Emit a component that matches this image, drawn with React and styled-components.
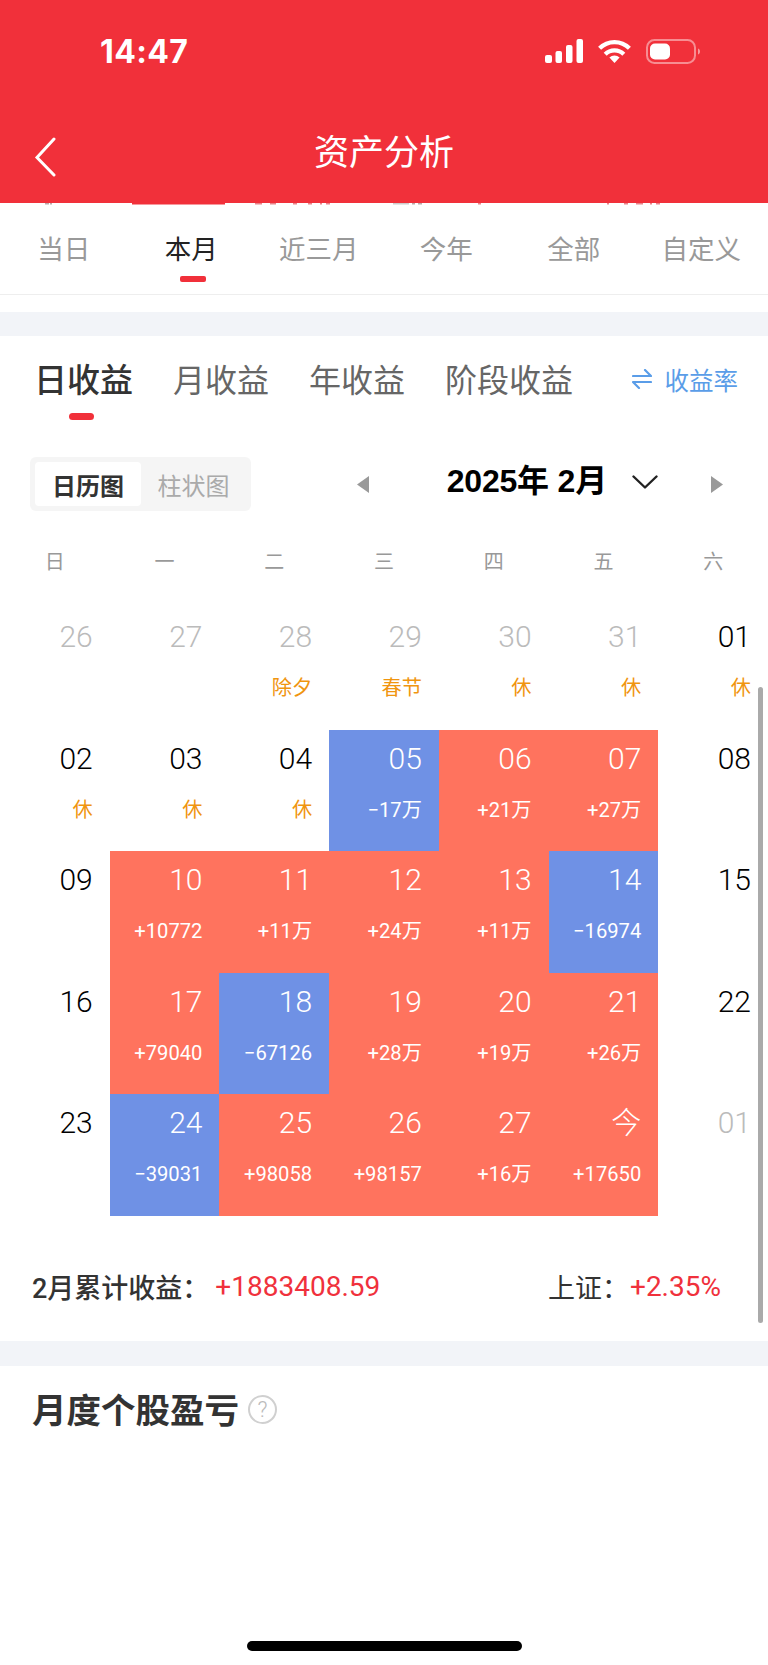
import React from "react";
import styled, { createGlobalStyle } from "styled-components";

const CJK = `Roboto, "Noto Sans CJK SC", sans-serif`;

const GlobalStyle = createGlobalStyle`
  html, body {
    margin: 0;
    padding: 0;
    background: #fff;
  }
  * {
    box-sizing: border-box;
  }
`;

const Page = styled.div`
  position: relative;
  width: 768px;
  height: 1665px;
  overflow: hidden;
  background: #fff;
  font-family: ${CJK};
`;

const Header = styled.header`
  height: 203px;
  background: #f1303a;
  color: #fff;
`;

const StatusBar = styled.div`
  height: 102px;
  display: flex;
  align-items: center;
  justify-content: space-between;
  padding: 0 68px 0 100px;
`;

const Time = styled.span`
  font-family: Inter, sans-serif;
  font-size: 32px;
  font-weight: 700;
  letter-spacing: 0.4px;
`;

const StatusIcons = styled.div`
  display: flex;
  align-items: center;
  gap: 14px;
`;

const NavBar = styled.div`
  height: 101px;
  display: grid;
  grid-template-columns: 1fr auto 1fr;
  align-items: center;
  padding-left: 34px;
`;

const BackIcon = styled.svg`
  display: block;
  margin-top: 8px;
`;

const NavTitle = styled.h1`
  margin: 2px 0 0 0;
  font-size: 35px;
  font-weight: 400;
  line-height: 40px;
  transform: translateX(-17px);
`;

const Sliver = styled.svg`
  display: block;
`;

const PeriodTabs = styled.nav`
  display: grid;
  grid-template-columns: repeat(6, 1fr);
  height: 90px;
  padding: 31px 3px 0 0;
  border-bottom: 1px solid #eeeeee;
`;

const PeriodTab = styled.div`
  display: flex;
  flex-direction: column;
  align-items: center;
  font-size: 26.5px;
  line-height: 28px;
  color: ${(p) => (p.$active ? "#222" : "#999")};
`;

const PeriodMark = styled.i`
  display: block;
  width: 26px;
  height: 6px;
  margin: 12px 0 0 4px;
  border-radius: 2px;
  background: #f1303a;
`;

const Band = styled.div`
  height: ${(p) => p.$h}px;
  margin-top: ${(p) => p.$mt || 0}px;
  background: #f2f4f8;
`;

const MainCard = styled.section`
  height: 1005px;
  background: #fff;
`;

const ProfitTabs = styled.div`
  display: flex;
  align-items: flex-start;
  gap: 40px;
  height: 121px;
  padding: 27px 30px 0 34px;
`;

const ProfitTab = styled.div`
  display: flex;
  flex-direction: column;
  align-items: center;
  font-size: ${(p) => (p.$active ? 33 : 32)}px;
  line-height: 36px;
  font-weight: ${(p) => (p.$active ? 500 : 400)};
  color: ${(p) => (p.$active ? "#333" : "#666")};
`;

const ProfitMark = styled.i`
  display: block;
  width: 25px;
  height: 7px;
  margin: 14px 5px 0 0;
  border-radius: 4px;
  background: #f1303a;
`;

const RateLink = styled.div`
  display: flex;
  align-items: center;
  gap: 13px;
  margin-left: auto;
  height: 32px;
  font-size: 24.5px;
  color: #5a9de8;
`;

const ToolRow = styled.div`
  display: flex;
  align-items: center;
  height: 54px;
  padding: 0 45px 0 30px;
`;

const Toggle = styled.div`
  display: flex;
  width: 221px;
  height: 54px;
  padding: 5px;
  border-radius: 6px;
  background: #f5f5f5;
`;

const ToggleItem = styled.div`
  display: flex;
  align-items: center;
  justify-content: center;
  width: ${(p) => (p.$active ? 106 : 105)}px;
  border-radius: 4px;
  font-size: 24px;
  font-weight: ${(p) => (p.$active ? 600 : 400)};
  color: ${(p) => (p.$active ? "#333" : "#aaa")};
  background: ${(p) => (p.$active ? "#fff" : "transparent")};
`;

const Pager = styled.div`
  display: flex;
  align-items: center;
  margin-left: auto;
`;

const MonthTitle = styled.div`
  margin: 0 25px 6px 78px;
  font-family: "Liberation Sans", "Noto Sans CJK SC", sans-serif;
  font-size: 32px;
  line-height: 36px;
  font-weight: 700;
  letter-spacing: -0.2px;
  color: #000;
  white-space: nowrap;
`;

const Chevron = styled.svg`
  display: block;
  margin-bottom: 4px;
`;

const NextSlot = styled.span`
  display: block;
  margin-left: 53px;
`;

const WeekRow = styled.div`
  display: grid;
  grid-template-columns: repeat(7, 1fr);
  margin: 40px 0 35px;
`;

const WeekDay = styled.div`
  text-align: center;
  font-size: 20px;
  line-height: 22px;
  color: #999;
`;

const Calendar = styled.div`
  display: grid;
  grid-template-columns: repeat(7, 1fr);
  grid-auto-rows: 121.6px;
`;

const toneBg = { up: "#ff735e", down: "#6f91e5" };

const DayCell = styled.div`
  display: flex;
  flex-direction: column;
  align-items: flex-end;
  padding: 12px 17px 0 0;
  background: ${(p) => toneBg[p.$tone] || "transparent"};
`;

const DayNum = styled.div`
  font-size: 30px;
  line-height: 33px;
  font-weight: 300;
  color: ${(p) => (p.$tone ? "#fff" : p.$muted ? "#bbb" : "#000")};
`;

const DayNote = styled.div`
  margin-top: 22px;
  font-size: 20.2px;
  line-height: 26px;
  color: ${(p) => (p.$tone ? "#fff" : "#f0950f")};
`;

const Summary = styled.div`
  display: flex;
  align-items: center;
  height: 40px;
  margin-top: 51px;
  padding: 0 47px 0 32px;
`;

const SummaryLabel = styled.span`
  font-size: 27px;
  font-weight: ${(p) => (p.$strong ? 500 : 400)};
  color: #333;
`;

const SummaryValue = styled.span`
  margin-right: ${(p) => (p.$push ? "auto" : "0")};
  margin-left: ${(p) => p.$gap}px;
  font-size: 28px;
  font-weight: 400;
  color: #f0313c;
`;

const StockTitle = styled.div`
  display: flex;
  align-items: center;
  gap: 9px;
  padding: 25px 0 0 32px;
  font-size: 34.5px;
  line-height: 40px;
  font-weight: 600;
  color: #333;
`;

const Help = styled.span`
  display: flex;
  align-items: center;
  justify-content: center;
  width: 29px;
  height: 29px;
  margin-bottom: 3px;
  border: 2px solid #d0d0d0;
  border-radius: 50%;
  font-size: 22px;
  font-weight: 300;
  line-height: 1;
  color: #bbb;
`;

const Scrollbar = styled.div`
  position: absolute;
  top: 687px;
  left: 758px;
  width: 5px;
  height: 636px;
  border-radius: 3px;
  background: #aaa;
`;

const HomeBar = styled.div`
  position: absolute;
  top: 1641px;
  left: 247px;
  width: 275px;
  height: 10px;
  border-radius: 5px;
  background: #000;
`;

const SignalIcon = () => (
  <svg width="38" height="24" viewBox="0 0 38 24" fill="#fff">
    <rect x="0" y="16" width="7" height="8" rx="2" />
    <rect x="10.5" y="12" width="6.5" height="12" rx="2" />
    <rect x="21" y="6" width="6.5" height="18" rx="2" />
    <rect x="31.5" y="0" width="6.5" height="24" rx="2" />
  </svg>
);

const WifiIcon = () => (
  <svg width="35" height="24" viewBox="0 0 35 24" fill="none" stroke="#fff" strokeWidth="4.2">
    <path d="M2.6 9.3A21 21 0 0 1 32.4 9.3" />
    <path d="M8.2 15.2A13 13 0 0 1 26.8 15.2" />
    <path d="M17.5 24 L12.4 18.6 A7.2 7.2 0 0 1 22.6 18.6 Z" fill="#fff" stroke="none" />
  </svg>
);

const BatteryIcon = () => (
  <svg width="54" height="25" viewBox="0 0 54 25" fill="none">
    <rect x="1" y="1" width="48" height="23" rx="7.5" stroke="#fff" strokeOpacity="0.45" strokeWidth="2" />
    <rect x="4" y="4.5" width="20" height="16" rx="5" fill="#fff" />
    <path d="M52 9.5c1.5.6 2 1.6 2 3s-.5 2.4-2 3z" fill="#fff" fillOpacity="0.5" />
  </svg>
);

const Triangle = ({ dir }) => (
  <svg width="12" height="17" viewBox="0 0 12 17" fill="#999" style={{ display: "block" }}>
    <path d={dir === "left" ? "M12 0V17L0 8.5Z" : "M0 0V17L12 8.5Z"} />
  </svg>
);

const fragments = [
  [45, 4, "#b9a9a9"], [50, 2, "#b9a9a9"],
  [132, 93, "#f1303a"],
  [255, 7, "#e8838a"], [270, 6, "#e8838a"], [293, 4, "#e8838a"], [308, 4, "#e8838a"], [320, 2, "#e8838a"], [326, 4, "#e8838a"],
  [393, 16, "#ccc"], [412, 3, "#b9a9a9"], [418, 4, "#b9a9a9"],
  [478, 3, "#e8838a"],
  [607, 2, "#e8838a"], [624, 4, "#e8838a"], [636, 7, "#e8838a"], [650, 2, "#e8838a"], [656, 4, "#e8838a"],
];

const periods = ["当日", "本月", "近三月", "今年", "全部", "自定义"];
const profits = ["日收益", "月收益", "年收益", "阶段收益"];
const weekDays = ["日", "一", "二", "三", "四", "五", "六"];

const days = [
  { n: "26", muted: true }, { n: "27", muted: true },
  { n: "28", muted: true, note: "除夕" }, { n: "29", muted: true, note: "春节" },
  { n: "30", muted: true, note: "休" }, { n: "31", muted: true, note: "休" },
  { n: "01", note: "休" },
  { n: "02", note: "休" }, { n: "03", note: "休" }, { n: "04", note: "休" },
  { n: "05", tone: "down", note: "−17万" }, { n: "06", tone: "up", note: "+21万" },
  { n: "07", tone: "up", note: "+27万" }, { n: "08" },
  { n: "09" }, { n: "10", tone: "up", note: "+10772" }, { n: "11", tone: "up", note: "+11万" },
  { n: "12", tone: "up", note: "+24万" }, { n: "13", tone: "up", note: "+11万" },
  { n: "14", tone: "down", note: "−16974" }, { n: "15" },
  { n: "16" }, { n: "17", tone: "up", note: "+79040" }, { n: "18", tone: "down", note: "−67126" },
  { n: "19", tone: "up", note: "+28万" }, { n: "20", tone: "up", note: "+19万" },
  { n: "21", tone: "up", note: "+26万" }, { n: "22" },
  { n: "23" }, { n: "24", tone: "down", note: "−39031" }, { n: "25", tone: "up", note: "+98058" },
  { n: "26", tone: "up", note: "+98157" }, { n: "27", tone: "up", note: "+16万" },
  { n: "今", tone: "up", note: "+17650" }, { n: "01", muted: true },
];

export default function App() {
  return (
    <Page>
      <GlobalStyle />
      <Header>
        <StatusBar>
          <Time>14:47</Time>
          <StatusIcons>
            <SignalIcon />
            <WifiIcon />
            <BatteryIcon />
          </StatusIcons>
        </StatusBar>
        <NavBar>
          <BackIcon width="22" height="40" viewBox="0 0 22 40" fill="none" stroke="#fff" strokeWidth="3" strokeLinecap="round">
            <path d="M20 2 3 20.5 20 38" />
          </BackIcon>
          <NavTitle>资产分析</NavTitle>
        </NavBar>
      </Header>
      <Sliver width="768" height="2" viewBox="0 0 768 2">
        {fragments.map(([x, w, c]) => (
          <rect key={x} x={x} y="0" width={w} height="1.5" fill={c} />
        ))}
      </Sliver>
      <PeriodTabs>
        {periods.map((label) => (
          <PeriodTab key={label} $active={label === "本月"}>
            {label}
            {label === "本月" && <PeriodMark />}
          </PeriodTab>
        ))}
      </PeriodTabs>
      <Band $h={24} $mt={17} />
      <MainCard>
        <ProfitTabs>
          {profits.map((label, i) => (
            <ProfitTab key={label} $active={i === 0}>
              {label}
              {i === 0 && <ProfitMark />}
            </ProfitTab>
          ))}
          <RateLink>
            <svg width="20" height="20" viewBox="0 0 20 20" fill="none" stroke="#5a9de8" strokeWidth="2.2" strokeLinecap="round" strokeLinejoin="round">
              <path d="M1 7H19L13 1" />
              <path d="M19 13H1L7 19" />
            </svg>
            收益率
          </RateLink>
        </ProfitTabs>
        <ToolRow>
          <Toggle>
            <ToggleItem $active>日历图</ToggleItem>
            <ToggleItem>柱状图</ToggleItem>
          </Toggle>
          <Pager>
            <Triangle dir="left" />
            <MonthTitle>2025年 2月</MonthTitle>
            <Chevron width="26" height="14" viewBox="0 0 26 14" fill="none" stroke="#222" strokeWidth="2.4" strokeLinecap="round" strokeLinejoin="round">
              <path d="M1.5 1.5 13 12.5 24.5 1.5" />
            </Chevron>
            <NextSlot>
              <Triangle dir="right" />
            </NextSlot>
          </Pager>
        </ToolRow>
        <WeekRow>
          {weekDays.map((d) => (
            <WeekDay key={d}>{d}</WeekDay>
          ))}
        </WeekRow>
        <Calendar>
          {days.map((d, i) => (
            <DayCell key={i} $tone={d.tone}>
              <DayNum $tone={d.tone} $muted={d.muted}>{d.n}</DayNum>
              {d.note && <DayNote $tone={d.tone}>{d.note}</DayNote>}
            </DayCell>
          ))}
        </Calendar>
        <Summary>
          <SummaryLabel $strong>2月累计收益：</SummaryLabel>
          <SummaryValue $push $gap={6}>+1883408.59</SummaryValue>
          <SummaryLabel>上证：</SummaryLabel>
          <SummaryValue $gap={1}>+2.35%</SummaryValue>
        </Summary>
      </MainCard>
      <Band $h={25} />
      <StockTitle>
        月度个股盈亏
        <Help>?</Help>
      </StockTitle>
      <Scrollbar />
      <HomeBar />
    </Page>
  );
}
